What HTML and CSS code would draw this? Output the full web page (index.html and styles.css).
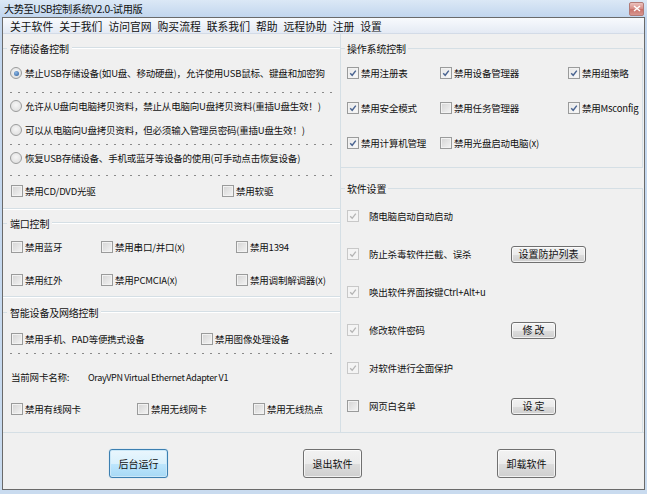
FILE: index.html
```html
<!DOCTYPE html>
<html lang="zh-CN">
<head>
  <meta charset="UTF-8" />
  <title>大势至USB控制系统V2.0-试用版</title>
  <link rel="stylesheet" href="styles.css">
</head>
<body>
<div class="window">

  <!-- Title bar -->
  <div class="titlebar">
    <span class="title">大势至USB控制系统V2.0-试用版</span>
    <span class="close-btn">
      <svg width="8" height="7" viewBox="0 0 8 7"><path d="M1 1 L7 6 M7 1 L1 6" stroke="#fff" stroke-width="1.5"/></svg>
    </span>
  </div>

  <div class="client">
    <!-- Menu -->
    <div class="menubar">
      <span>关于软件</span>
      <span>关于我们</span>
      <span>访问官网</span>
      <span>购买流程</span>
      <span>联系我们</span>
      <span>帮助</span>
      <span>远程协助</span>
      <span>注册</span>
      <span>设置</span>
    </div>

    <div class="main">
      <!-- Left column -->
      <div class="left">
        <div class="gtitle gt-1"><span>存储设备控制</span></div>
        <div class="row row-r1"><span class="radio checked"></span>禁止USB存储设备(如U盘、移动硬盘)，允许使用USB鼠标、键盘和加密狗</div>
        <div class="dash dash-1"></div>
        <div class="row row-r2"><span class="radio"></span>允许从U盘向电脑拷贝资料，禁止从电脑向U盘拷贝资料(重插U盘生效！)</div>
        <div class="row row-r3"><span class="radio"></span>可以从电脑向U盘拷贝资料，但必须输入管理员密码(重插U盘生效！)</div>
        <div class="dash dash-2"></div>
        <div class="row row-r4"><span class="radio"></span>恢复USB存储设备、手机或蓝牙等设备的使用(可手动点击恢复设备)</div>
        <div class="dash dash-3"></div>
        <div class="row row-cd">
          <span class="cell w211"><span class="cb"></span>禁用CD/DVD光驱</span>
          <span class="cell"><span class="cb"></span>禁用软驱</span>
        </div>
        <div class="sep sep-1"></div>

        <div class="gtitle gt-2"><span>端口控制</span></div>
        <div class="row row-p1">
          <span class="cell w90"><span class="cb"></span>禁用蓝牙</span>
          <span class="cell w135"><span class="cb"></span>禁用串口/并口(x)</span>
          <span class="cell"><span class="cb"></span>禁用1394</span>
        </div>
        <div class="row row-p2">
          <span class="cell w90"><span class="cb"></span>禁用红外</span>
          <span class="cell w135"><span class="cb"></span>禁用PCMCIA(x)</span>
          <span class="cell"><span class="cb"></span>禁用调制解调器(x)</span>
        </div>
        <div class="sep"></div>

        <div class="gtitle gt-3"><span>智能设备及网络控制</span></div>
        <div class="row row-s1">
          <span class="cell w190"><span class="cb"></span>禁用手机、PAD等便携式设备</span>
          <span class="cell"><span class="cb"></span>禁用图像处理设备</span>
        </div>
        <div class="dash"></div>
        <div class="row row-nic">
          <span class="nic-label">当前网卡名称:</span>
          <span class="nic-name">OrayVPN Virtual Ethernet Adapter V1</span>
        </div>
        <div class="row row-net">
          <span class="cell w126"><span class="cb"></span>禁用有线网卡</span>
          <span class="cell w116"><span class="cb"></span>禁用无线网卡</span>
          <span class="cell"><span class="cb"></span>禁用无线热点</span>
        </div>
      </div>

      <!-- Right column -->
      <div class="right">
        <div class="box box-os">
          <div class="box-title"><span>操作系统控制</span></div>
          <div class="os-grid">
            <span class="cell"><span class="cb checked"><svg width="10" height="10" viewBox="0 0 10 10"><path d="M2.2 5.2 L4.2 7.3 L7.8 2.6" fill="none" stroke="#4a6491" stroke-width="1.4"/></svg></span>禁用注册表</span>
            <span class="cell"><span class="cb checked"><svg width="10" height="10" viewBox="0 0 10 10"><path d="M2.2 5.2 L4.2 7.3 L7.8 2.6" fill="none" stroke="#4a6491" stroke-width="1.4"/></svg></span>禁用设备管理器</span>
            <span class="cell"><span class="cb checked"><svg width="10" height="10" viewBox="0 0 10 10"><path d="M2.2 5.2 L4.2 7.3 L7.8 2.6" fill="none" stroke="#4a6491" stroke-width="1.4"/></svg></span>禁用组策略</span>
            <span class="cell"><span class="cb checked"><svg width="10" height="10" viewBox="0 0 10 10"><path d="M2.2 5.2 L4.2 7.3 L7.8 2.6" fill="none" stroke="#4a6491" stroke-width="1.4"/></svg></span>禁用安全模式</span>
            <span class="cell"><span class="cb"></span>禁用任务管理器</span>
            <span class="cell"><span class="cb checked"><svg width="10" height="10" viewBox="0 0 10 10"><path d="M2.2 5.2 L4.2 7.3 L7.8 2.6" fill="none" stroke="#4a6491" stroke-width="1.4"/></svg></span>禁用Msconfig</span>
            <span class="cell"><span class="cb checked"><svg width="10" height="10" viewBox="0 0 10 10"><path d="M2.2 5.2 L4.2 7.3 L7.8 2.6" fill="none" stroke="#4a6491" stroke-width="1.4"/></svg></span>禁用计算机管理</span>
            <span class="cell"><span class="cb"></span>禁用光盘启动电脑(x)</span>
          </div>
        </div>

        <div class="box box-soft">
          <div class="box-title"><span>软件设置</span></div>
          <div class="soft-list">
            <div class="srow">
              <span class="cb disabled"><svg width="10" height="10" viewBox="0 0 10 10"><path d="M2.2 5.2 L4.2 7.3 L7.8 2.6" fill="none" stroke="#b4b4b4" stroke-width="1.3"/></svg></span>
              <span class="lbl">随电脑启动自动启动</span>
            </div>
            <div class="srow">
              <span class="cb disabled"><svg width="10" height="10" viewBox="0 0 10 10"><path d="M2.2 5.2 L4.2 7.3 L7.8 2.6" fill="none" stroke="#b4b4b4" stroke-width="1.3"/></svg></span>
              <span class="lbl">防止杀毒软件拦截、误杀</span>
              <button class="btn btn-small w75">设置防护列表</button>
            </div>
            <div class="srow">
              <span class="cb disabled"><svg width="10" height="10" viewBox="0 0 10 10"><path d="M2.2 5.2 L4.2 7.3 L7.8 2.6" fill="none" stroke="#b4b4b4" stroke-width="1.3"/></svg></span>
              <span class="lbl">唤出软件界面按键Ctrl+Alt+u</span>
            </div>
            <div class="srow">
              <span class="cb disabled"><svg width="10" height="10" viewBox="0 0 10 10"><path d="M2.2 5.2 L4.2 7.3 L7.8 2.6" fill="none" stroke="#b4b4b4" stroke-width="1.3"/></svg></span>
              <span class="lbl">修改软件密码</span>
              <button class="btn btn-small w45">修 改</button>
            </div>
            <div class="srow">
              <span class="cb disabled"><svg width="10" height="10" viewBox="0 0 10 10"><path d="M2.2 5.2 L4.2 7.3 L7.8 2.6" fill="none" stroke="#b4b4b4" stroke-width="1.3"/></svg></span>
              <span class="lbl">对软件进行全面保护</span>
            </div>
            <div class="srow">
              <span class="cb"></span>
              <span class="lbl">网页白名单</span>
              <button class="btn btn-small w45">设 定</button>
            </div>
          </div>
        </div>
      </div>
    </div>

    <!-- Bottom buttons -->
    <div class="footer">
      <button class="btn btn-big default">后台运行</button>
      <button class="btn btn-big">退出软件</button>
      <button class="btn btn-big">卸载软件</button>
    </div>
  </div>
</div>
</body>
</html>
```

FILE: styles.css
```css
* {
  margin: 0;
  padding: 0;
  box-sizing: border-box;
}

html, body {
  width: 647px;
  height: 494px;
  overflow: hidden;
}

body {
  font-family: "Noto Sans CJK SC", "Noto Sans", sans-serif;
  font-size: 9.5px;
  letter-spacing: -0.2px;
  color: #111;
  background: #c6d9ef;
}

.window {
  width: 647px;
  height: 494px;
  display: flex;
  flex-direction: column;
  background: linear-gradient(to bottom, #dbe8f6 0, #c2d6ee 17px, #c9dbef 100%);
}

/* === TITLE BAR === */
.titlebar {
  height: 17px;
  display: flex;
  align-items: center;
  justify-content: space-between;
  padding: 0 3px 0 4px;
}

.title {
  font-size: 10.2px;
  letter-spacing: -0.4px;
  line-height: 17px;
}

.close-btn {
  width: 15px;
  height: 14px;
  border: 1px solid #b27a76;
  border-radius: 2px;
  background: linear-gradient(to bottom, #ecc2be, #d68a84 50%, #c97068 51%, #d8958f);
  display: flex;
  align-items: center;
  justify-content: center;
}

/* === CLIENT AREA === */
.client {
  flex: 1;
  margin: 0 2px 4px 2px;
  border: 1px solid #6a6a6a;
  background: #f0f0f0;
  display: flex;
  flex-direction: column;
}

.menubar {
  height: 16px;
  display: flex;
  align-items: center;
  padding-left: 4px;
  font-size: 10.8px;
  letter-spacing: 0;
  background: linear-gradient(to bottom, #f8fafd, #e4eaf4);
  border-bottom: 1px solid #d3dbe7;
}

.menubar span {
  padding: 0 3px;
}

.main {
  height: 398px;
  display: flex;
}

/* === LEFT COLUMN === */
.left {
  width: 338px;
  border-right: 1px solid #d5dfe5;
  display: flex;
  flex-direction: column;
}

.gtitle {
  height: 14px;
  display: flex;
  align-items: center;
  font-size: 10px;
}

.gtitle::before {
  content: "";
  width: 4px;
  border-top: 1px solid #d5dfe5;
}

.gtitle span {
  padding: 0 3px;
}

.gtitle::after {
  content: "";
  flex: 1;
  border-top: 1px solid #d5dfe5;
  border-bottom: 1px solid #fff;
}

.gt-1 { margin-top: 7px; }
.gt-2 { margin-top: 6px; }
.gt-3 { margin-top: 7px; }

.row {
  display: flex;
  align-items: center;
  padding-left: 7px;
  white-space: nowrap;
}

.row-r1 { height: 36px; }
.row-r2 { height: 25px; }
.row-r3 { height: 23px; }
.row-r4 { height: 26px; }
.row-cd { height: 30px; padding-left: 8px; }
.row-p1 { height: 34px; padding-left: 8px; }
.row-p2 { height: 32px; padding-left: 8px; }
.row-s1 { height: 34px; padding-top: 6px; padding-left: 8px; }
.row-nic { height: 46px; }
.row-net { height: 18px; padding-left: 8px; }

.cell {
  display: flex;
  align-items: center;
  gap: 1px;
  white-space: nowrap;
}

.w90 { width: 90px; }
.w116 { width: 116px; }
.w126 { width: 126px; }
.w135 { width: 135px; }
.w190 { width: 190px; }
.w211 { width: 211px; }

.dash {
  height: 1px;
  margin: 0 4px 0 7px;
  background: repeating-linear-gradient(to right, #8a8a8a 0 2px, transparent 2px 8px);
}

.dash-1 { margin-top: 1px; }
.dash-2 { margin-top: 3px; }
.dash-3 { margin-top: 4px; }

.sep {
  height: 2px;
  border-top: 1px solid #d5dfe5;
  border-bottom: 1px solid #fff;
}

.sep-1 { margin-top: 2px; }

.nic-label {
  width: 78px;
  padding-left: 1px;
}

.nic-name {
  font-size: 9px;
  letter-spacing: -0.35px;
}

/* === RADIO / CHECKBOX === */
.radio {
  width: 12px;
  height: 12px;
  border-radius: 50%;
  border: 1px solid #9a9b9b;
  background: radial-gradient(circle at 50% 40%, #f6f6f6, #dadada);
  margin-right: 3px;
  flex-shrink: 0;
  display: flex;
  align-items: center;
  justify-content: center;
}

.radio.checked::after {
  content: "";
  width: 5px;
  height: 5px;
  border-radius: 50%;
  background: radial-gradient(circle at 40% 35%, #8cb8e6, #2a5a98);
}

.cb {
  width: 12px;
  height: 12px;
  border: 1px solid #9a9b9b;
  background: linear-gradient(135deg, #d4d4d4, #f4f4f4);
  box-shadow: inset 0 0 0 1px #f2f2f2;
  flex-shrink: 0;
  display: flex;
  align-items: center;
  justify-content: center;
  margin-right: 1px;
}

.cb.checked {
  background: linear-gradient(135deg, #e6e6e6, #fbfbfb);
}

.cb.disabled {
  border-color: #c8c8c8;
  background: #f4f4f4;
  box-shadow: none;
}

/* === RIGHT COLUMN === */
.right {
  flex: 1;
  display: flex;
  flex-direction: column;
}

.box {
  margin-right: 1px;
  border-top: 1px solid #d5dfe5;
  border-right: 1px solid #d5dfe5;
}

.box-title {
  height: 14px;
  margin-top: -8px;
  display: flex;
  align-items: center;
  font-size: 10px;
}

.box-title span {
  margin-left: 4px;
  padding: 0 2px;
  background: #f0f0f0;
}

.box-os {
  margin-top: 14px;
  height: 120px;
  border-bottom: 1px solid #d5dfe5;
}

.os-grid {
  display: grid;
  grid-template-columns: 93px 128px 1fr;
  grid-auto-rows: 35px;
  align-items: center;
  padding-left: 6px;
}

.box-soft {
  flex: 1;
  margin-top: 20px;
}

.soft-list {
  margin-top: 2px;
}

.srow {
  height: 38px;
  display: flex;
  align-items: center;
  padding-left: 6px;
}

.srow .cb {
  margin-right: 10px;
}

.srow .lbl {
  width: 142px;
  white-space: nowrap;
}

/* === BUTTONS === */
.btn {
  font-family: inherit;
  font-size: 10px;
  color: #111;
  border: 1px solid #707070;
  border-radius: 3px;
  background: linear-gradient(to bottom, #f2f2f2 0%, #ebebeb 50%, #dddddd 51%, #cfcfcf 100%);
  box-shadow: inset 0 0 0 1px rgba(255, 255, 255, 0.7);
}

.btn-small {
  height: 17px;
  line-height: 14px;
}

.w75 { width: 75px; }
.w45 { width: 45px; }

.btn-big {
  width: 59px;
  height: 29px;
}

.btn.default {
  border-color: #3c7fb1;
  background: linear-gradient(to bottom, #eaf6fd 0%, #d9f0fc 50%, #bee6fd 51%, #a7d9f5 100%);
  box-shadow: inset 0 0 0 1px #cbe8f8, 0 0 1px #7fc1e6;
}

.footer {
  flex: 1;
  border-top: 1px solid #d5dfe5;
  display: flex;
  align-items: flex-start;
  padding: 16px 0 0 106px;
  gap: 135px;
}
```
